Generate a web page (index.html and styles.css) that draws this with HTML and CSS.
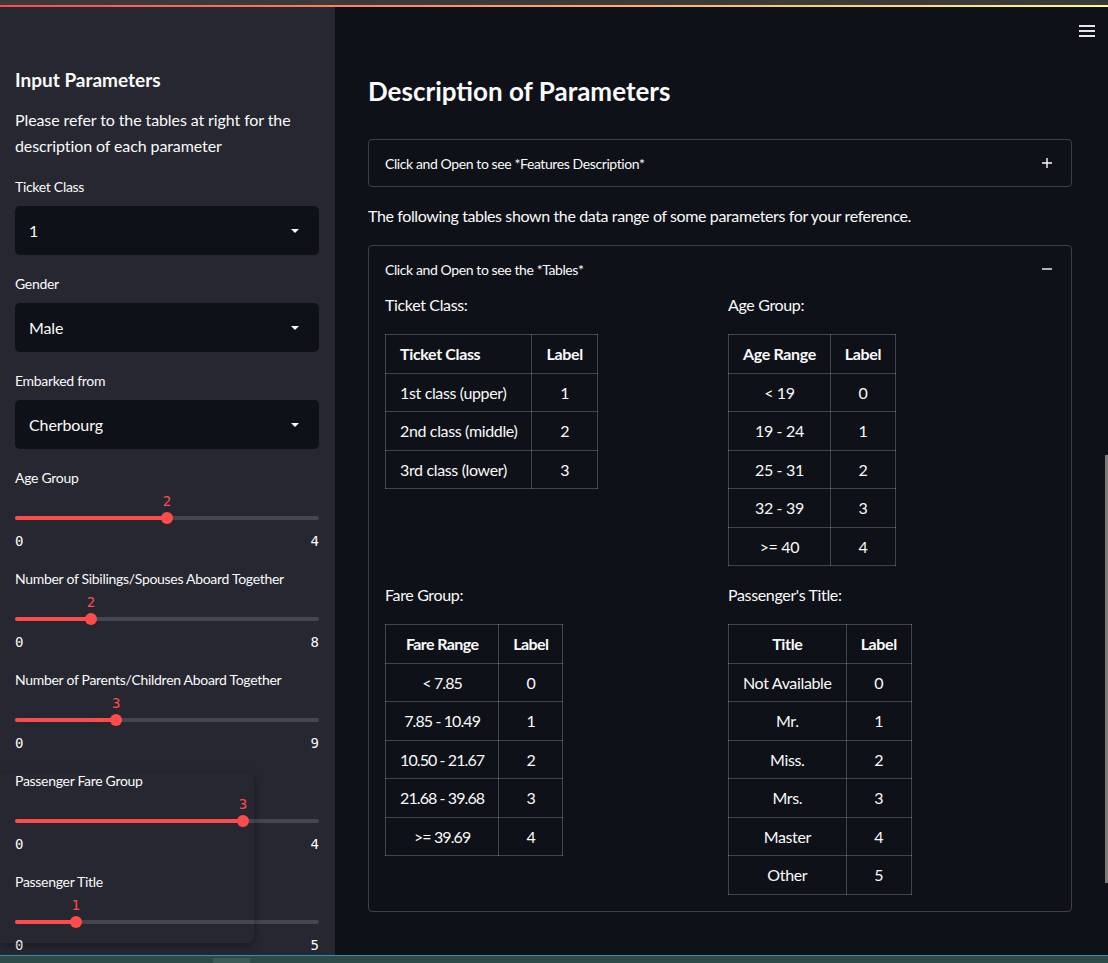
FILE: index.html
```html
<!DOCTYPE html>
<html lang="en">
<head>
<meta charset="utf-8">
<title>Titanic Survival</title>
<link rel="stylesheet" href="styles.css">
</head>
<body>
<div class="chrome"></div>
<div class="decoration"></div>
<div class="app">
  <aside class="sidebar">
    <h2 class="sb-title">Input Parameters</h2>
    <p class="sb-text">Please refer to the tables at right for the description of each parameter</p>

    <div class="field">
      <div class="label">Ticket Class</div>
      <div class="select"><span>1</span><svg class="caret" width="10" height="6" viewBox="0 0 10 6"><path d="M1 1h8L5 5z" fill="#fafafa"/></svg></div>
    </div>
    <div class="field">
      <div class="label">Gender</div>
      <div class="select"><span>Male</span><svg class="caret" width="10" height="6" viewBox="0 0 10 6"><path d="M1 1h8L5 5z" fill="#fafafa"/></svg></div>
    </div>
    <div class="field">
      <div class="label">Embarked from</div>
      <div class="select"><span>Cherbourg</span><svg class="caret" width="10" height="6" viewBox="0 0 10 6"><path d="M1 1h8L5 5z" fill="#fafafa"/></svg></div>
    </div>

    <div class="slider">
      <div class="label">Age Group</div>
      <div class="val-row"><span class="val" style="left:50%">2</span></div>
      <div class="track"><div class="fill" style="width:50%"></div><div class="thumb" style="left:50%"></div></div>
      <div class="ticks"><span>0</span><span>4</span></div>
    </div>
    <div class="slider">
      <div class="label">Number of Sibilings/Spouses Aboard Together</div>
      <div class="val-row"><span class="val" style="left:25%">2</span></div>
      <div class="track"><div class="fill" style="width:25%"></div><div class="thumb" style="left:25%"></div></div>
      <div class="ticks"><span>0</span><span>8</span></div>
    </div>
    <div class="slider">
      <div class="label">Number of Parents/Children Aboard Together</div>
      <div class="val-row"><span class="val" style="left:33.333%">3</span></div>
      <div class="track"><div class="fill" style="width:33.333%"></div><div class="thumb" style="left:33.333%"></div></div>
      <div class="ticks"><span>0</span><span>9</span></div>
    </div>
    <div class="slider">
      <div class="label">Passenger Fare Group</div>
      <div class="val-row"><span class="val" style="left:75%">3</span></div>
      <div class="track"><div class="fill" style="width:75%"></div><div class="thumb" style="left:75%"></div></div>
      <div class="ticks"><span>0</span><span>4</span></div>
    </div>
    <div class="slider">
      <div class="label">Passenger Title</div>
      <div class="val-row"><span class="val" style="left:20%">1</span></div>
      <div class="track"><div class="fill" style="width:20%"></div><div class="thumb" style="left:20%"></div></div>
      <div class="ticks"><span>0</span><span>5</span></div>
    </div>
    <div class="popover-shadow"></div>
  </aside>

  <main class="main">
    <button class="menu" aria-label="menu">
      <svg width="16" height="12" viewBox="0 0 16 12"><rect x="0" y="0" width="16" height="2" fill="#e6e6e6"/><rect x="0" y="5" width="16" height="2" fill="#e6e6e6"/><rect x="0" y="10" width="16" height="2" fill="#e6e6e6"/></svg>
    </button>
    <h1 class="title">Description of Parameters</h1>

    <div class="expander">
      <div class="exp-head">
        <span>Click and Open to see *Features Description*</span>
        <svg width="10" height="10" viewBox="0 0 10 10"><path d="M5 0v10M0 5h10" stroke="#fafafa" stroke-width="1.4"/></svg>
      </div>
    </div>

    <p class="intro">The following tables shown the data range of some parameters for your reference.</p>

    <div class="expander">
      <div class="exp-head">
        <span>Click and Open to see the *Tables*</span>
        <svg width="10" height="10" viewBox="0 0 10 10"><path d="M0 5h10" stroke="#fafafa" stroke-width="1.4"/></svg>
      </div>
      <div class="exp-body">
        <section class="tbl-block">
          <p class="caption">Ticket Class:</p>
          <table class="tbl">
            <thead><tr><th class="left">Ticket Class</th><th>Label</th></tr></thead>
            <tbody>
              <tr><td class="left">1st class (upper)</td><td>1</td></tr>
              <tr><td class="left">2nd class (middle)</td><td>2</td></tr>
              <tr><td class="left">3rd class (lower)</td><td>3</td></tr>
            </tbody>
          </table>
        </section>
        <section class="tbl-block">
          <p class="caption">Age Group:</p>
          <table class="tbl">
            <thead><tr><th>Age Range</th><th>Label</th></tr></thead>
            <tbody>
              <tr><td>&lt; 19</td><td>0</td></tr>
              <tr><td>19 - 24</td><td>1</td></tr>
              <tr><td>25 - 31</td><td>2</td></tr>
              <tr><td>32 - 39</td><td>3</td></tr>
              <tr><td>&gt;= 40</td><td>4</td></tr>
            </tbody>
          </table>
        </section>
        <section class="tbl-block">
          <p class="caption">Fare Group:</p>
          <table class="tbl tbl-num">
            <thead><tr><th>Fare Range</th><th>Label</th></tr></thead>
            <tbody>
              <tr><td>&lt; 7.85</td><td>0</td></tr>
              <tr><td>7.85 - 10.49</td><td>1</td></tr>
              <tr><td>10.50 - 21.67</td><td>2</td></tr>
              <tr><td>21.68 - 39.68</td><td>3</td></tr>
              <tr><td>&gt;= 39.69</td><td>4</td></tr>
            </tbody>
          </table>
        </section>
        <section class="tbl-block">
          <p class="caption">Passenger's Title:</p>
          <table class="tbl">
            <thead><tr><th>Title</th><th>Label</th></tr></thead>
            <tbody>
              <tr><td>Not Available</td><td>0</td></tr>
              <tr><td>Mr.</td><td>1</td></tr>
              <tr><td>Miss.</td><td>2</td></tr>
              <tr><td>Mrs.</td><td>3</td></tr>
              <tr><td>Master</td><td>4</td></tr>
              <tr><td>Other</td><td>5</td></tr>
            </tbody>
          </table>
        </section>
      </div>
    </div>
    <div class="scrollbar"></div>
  </main>
</div>
<div class="taskbar"><div class="task-item"></div></div>
</body>
</html>
```

FILE: styles.css
```css
* { box-sizing: border-box; }
html, body { margin: 0; padding: 0; }
body {
  width: 1108px;
  height: 963px;
  overflow: hidden;
  background: #0e1117;
  color: #fafafa;
  font-family: Lato, "Noto Sans", sans-serif;
  letter-spacing: -0.35px;
}
.chrome { height: 5px; background: #3a3a3a; }
.decoration { height: 2px; background: linear-gradient(90deg, #ff4b4b, #fffd80); }
.app { display: flex; height: 948px; }

/* Sidebar */
.sidebar {
  position: relative;
  width: 335px;
  flex: none;
  background: #262730;
  padding: 61px 16px 0 15px;
}
.sb-title { margin: 0; font-size: 19px; font-weight: 700; line-height: 24px; letter-spacing: 0; }
.sb-text { margin: 15px 0 0; font-size: 16px; line-height: 26px; letter-spacing: -0.1px; }
.label { font-size: 14px; line-height: 20px; height: 20px; white-space: nowrap; letter-spacing: -0.3px; }
.field { margin-top: 18px; }
.field + .field { margin-top: 19px; }
.select {
  margin-top: 9px;
  height: 49px;
  background: #0e1117;
  border-radius: 5px;
  display: flex;
  align-items: center;
  justify-content: space-between;
  padding: 0 19px 0 14px;
  font-size: 16px;
  letter-spacing: -0.1px;
}
.caret { display: block; }
.slider { margin-top: 19px; }
.slider + .slider { margin-top: 18px; }
.val-row { position: relative; height: 20px; margin-top: 3px; }
.val {
  position: absolute;
  top: 0;
  transform: translateX(-50%);
  font-family: "DejaVu Sans Mono", "Liberation Mono", monospace;
  font-size: 14px;
  line-height: 20px;
  letter-spacing: 0;
  color: #ff4b4b;
}
.track {
  position: relative;
  height: 4px;
  margin: 5px 0;
  background: #45464f;
  border-radius: 2px;
}
.fill { height: 4px; background: #ff4b4b; border-radius: 2px; }
.thumb {
  position: absolute;
  top: -4px;
  width: 12px;
  height: 12px;
  margin-left: -6px;
  border-radius: 50%;
  background: #ff4b4b;
}
.ticks {
  display: flex;
  justify-content: space-between;
  margin-top: 11px;
  height: 20px;
  font-family: "DejaVu Sans Mono", "Liberation Mono", monospace;
  font-size: 14px;
  line-height: 20px;
  letter-spacing: 0;
}
.popover-shadow {
  position: absolute;
  left: 0;
  top: 766px;
  width: 254px;
  height: 170px;
  border-radius: 0 0 8px 0;
  box-shadow: 1px 3px 8px rgba(0, 0, 0, 0.3);
  pointer-events: none;
}

/* Main */
.main {
  position: relative;
  flex: 1;
  padding: 64px 36px 0 33px;
}
.menu {
  position: absolute;
  top: 18px;
  right: 13px;
  border: 0;
  background: none;
  padding: 0;
  display: block;
}
.menu svg { display: block; }
.title { margin: 0; font-size: 26px; font-weight: 700; line-height: 40px; letter-spacing: 0; }
.expander {
  margin-top: 28px;
  border: 1px solid rgba(250, 250, 250, 0.2);
  border-radius: 4px;
}
.exp-head {
  height: 46px;
  display: flex;
  align-items: center;
  justify-content: space-between;
  padding: 0 19px 0 16px;
  font-size: 14px;
  letter-spacing: -0.4px;
}
.exp-head svg { display: block; }
.intro { margin: 16px 0 0; font-size: 16px; line-height: 26px; letter-spacing: -0.38px; }
.intro + .expander { margin-top: 16px; }
.exp-body {
  display: grid;
  grid-template-columns: 327px 327px;
  column-gap: 16px;
  row-gap: 16px;
  padding: 0 16px 16px 16px;
}
.caption { margin: 0 0 16px; font-size: 16px; line-height: 26px; }
.tbl { border-collapse: collapse; font-size: 16px; }
.tbl th, .tbl td {
  border: 1px solid rgba(250, 250, 250, 0.22);
  padding: 6px 14px;
  line-height: 25.5px;
  text-align: center;
}
.tbl th { font-weight: 700; }
.tbl .left { text-align: left; }
.tbl-num td { letter-spacing: -0.9px; }
.tbl-num th { letter-spacing: -0.6px; }
.scrollbar {
  position: absolute;
  right: 0;
  top: 448px;
  width: 3px;
  height: 428px;
  background: #7a7a7a;
}
.taskbar {
  position: relative;
  height: 8px;
  background: #2c4a47;
  border-top: 1px solid #3f8aa6;
}
.task-item {
  position: absolute;
  left: 213px;
  top: 2px;
  width: 37px;
  height: 6px;
  background: #3c5a57;
}
```
